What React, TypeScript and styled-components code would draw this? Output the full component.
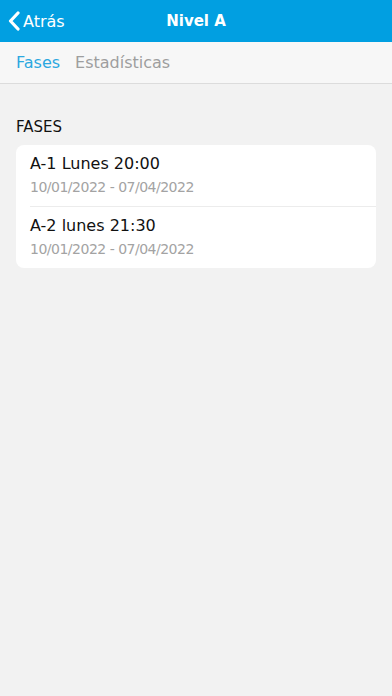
import React from 'react';
import styled, { createGlobalStyle } from 'styled-components';

const GlobalStyle = createGlobalStyle`
    html, body {
        margin: 0;
        padding: 0;
        background: #f2f2f2;
    }
    body {
        font-family: "DejaVu Sans", "Noto Sans", sans-serif;
    }
`;

interface IFase {
    name: string;
    dates: string;
}

const fases: IFase[] = [
    { name: 'A-1 Lunes 20:00', dates: '10/01/2022 - 07/04/2022' },
    { name: 'A-2 lunes 21:30', dates: '10/01/2022 - 07/04/2022' },
];

const App = (): JSX.Element => {
    return (
        <>
            <GlobalStyle />
            <SPage>
                <SHeader>
                    <SBack>
                        <svg width="12" height="20" viewBox="0 0 12 20">
                            <path d="M10 2 L2.5 10 L10 18" fill="none" stroke="#fff" strokeWidth="3.2" strokeLinecap="round" strokeLinejoin="round" />
                        </svg>
                        <span>Atrás</span>
                    </SBack>
                    <STitle>Nivel A</STitle>
                </SHeader>
                <STabs>
                    <STab active>Fases</STab>
                    <STab>Estadísticas</STab>
                </STabs>
                <SSection>
                    <SLabel>FASES</SLabel>
                    <SCard>
                        {fases.map((f) => (
                            <SRow key={f.name}>
                                <SName>{f.name}</SName>
                                <SDates>{f.dates}</SDates>
                            </SRow>
                        ))}
                    </SCard>
                </SSection>
            </SPage>
        </>
    );
};

const SPage = styled.div`
    min-height: 696px;
    background: #f2f2f2;
`;

const SHeader = styled.div`
    position: relative;
    height: 42px;
    background: #019fe1;
    display: flex;
    align-items: center;
    justify-content: center;
`;

const SBack = styled.div`
    position: absolute;
    left: 8px;
    top: 0;
    bottom: 0;
    display: flex;
    align-items: center;
    gap: 3px;
    color: #fff;
    font-size: 16px;
`;

const STitle = styled.span`
    color: #fff;
    font-size: 15px;
    font-weight: bold;
`;

const STabs = styled.div`
    height: 41px;
    display: flex;
    align-items: center;
    gap: 15px;
    padding: 0 16px;
    background: #f7f7f7;
    border-bottom: 1px solid #dcdcdc;
`;

const STab = styled.span<{ active?: boolean }>`
    font-size: 16px;
    color: ${(p) => (p.active ? '#2ba8e0' : '#9e9e9e')};
`;

const SSection = styled.div`
    padding: 34px 16px 0;
`;

const SLabel = styled.div`
    font-size: 15px;
    color: #111;
    margin-bottom: 9px;
`;

const SCard = styled.div`
    background: #fff;
    border-radius: 8px;
    overflow: hidden;
`;

const SRow = styled.div`
    padding: 8px 0 7px 14px;
    & + & {
        border-top: 1px solid #ececec;
        margin-left: 14px;
        padding-left: 0;
    }
`;

const SName = styled.div`
    font-size: 16px;
    color: #111;
    line-height: 22px;
`;

const SDates = styled.div`
    font-size: 14px;
    letter-spacing: -0.5px;
    color: #a3a3a3;
    line-height: 24px;
`;

export default App;
